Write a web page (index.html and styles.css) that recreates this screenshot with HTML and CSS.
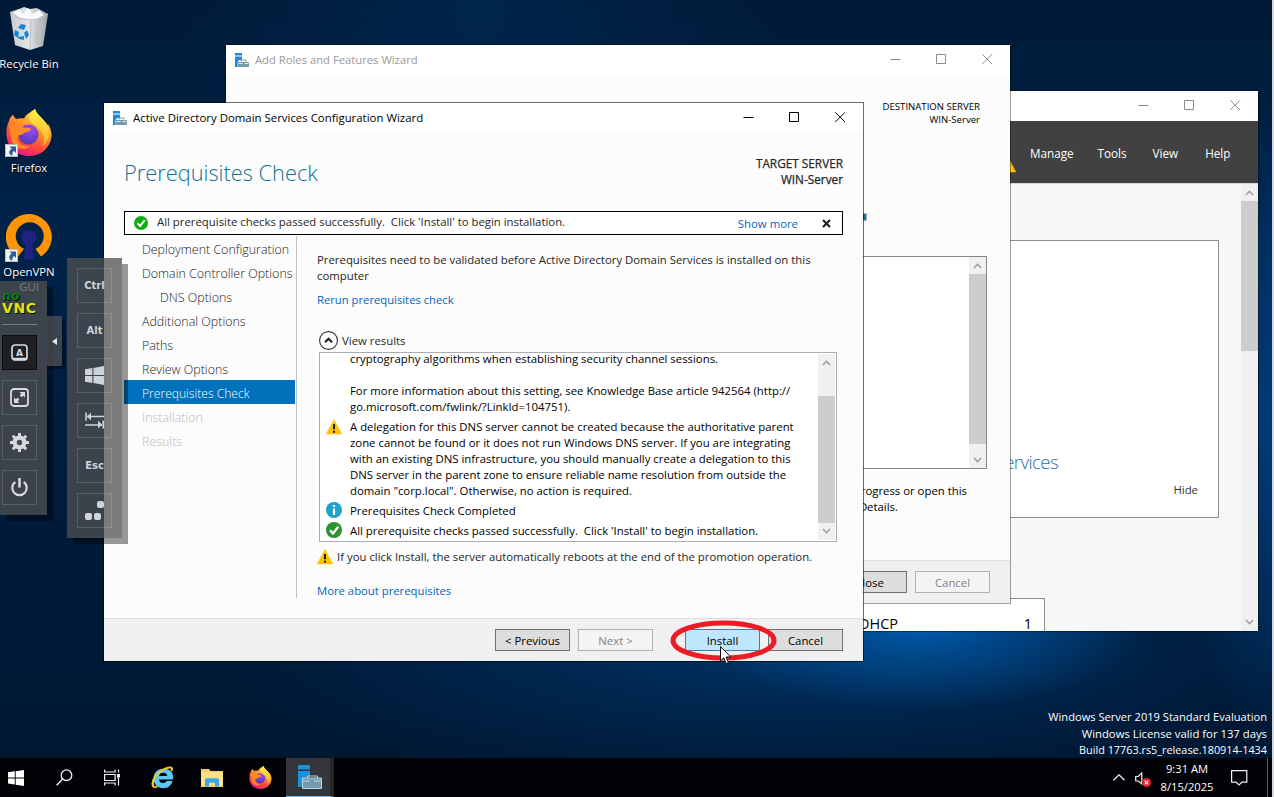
FILE: index.html
```html
<!DOCTYPE html>
<html lang="en">
<head>
<meta charset="utf-8">
<title>Windows Server desktop</title>
<link rel="stylesheet" href="styles.css">
</head>
<body>
<svg class="defs" aria-hidden="true">
  <defs>
    <linearGradient id="ffBody" x1=".8" y1="0" x2=".3" y2="1"><stop offset="0" stop-color="#fff44f"/><stop offset=".35" stop-color="#ffa52a"/><stop offset=".7" stop-color="#ff4a3a"/><stop offset="1" stop-color="#e31587"/></linearGradient>
    <radialGradient id="ffGlobe" cx=".6" cy=".25" r=".8"><stop offset="0" stop-color="#a34bf0"/><stop offset=".6" stop-color="#6a3fd0"/><stop offset="1" stop-color="#4a3aa8"/></radialGradient>
    <linearGradient id="ffTail" x1="0" y1="0" x2="0" y2="1"><stop offset="0" stop-color="#fff04a"/><stop offset="1" stop-color="#ffb02c"/></linearGradient>
    <linearGradient id="bin" x1="0" x2="1"><stop offset="0" stop-color="#c9ccd0"/><stop offset=".5" stop-color="#e2e4e6"/><stop offset="1" stop-color="#9da1a6"/></linearGradient>
  </defs>
  <symbol id="firefox" viewBox="0 0 46 47">
    <path d="M3 12C4 8 6 7 7 5.500C8 8 9 9.500 11 10C13 9 16 9 18 9.500C20 5 25 3 29 0C31 6 36 8 40 14C41 15 42 17 42 15C45 20 46 24 45.500 28C44 39 35 47 23 47C10 47 1 38 .5 26C.3 20 1 16 3 12Z" fill="url(#ffBody)"/>
    <circle cx="22.500" cy="25.500" r="10" fill="url(#ffGlobe)"/>
    <path d="M29 0C31 6 36 8 40 14C45 21 44 31 37 37C39 31 38 24 34 21C30 15 21 14 23 7C24 4 27 2 29 0Z" fill="url(#ffTail)"/>
    <path d="M3 17C7 14 13 15 16 18C19 19 23 18 25 20C24 23 19 23 17 25C15 27 13 25 12 27C10 34 17 38 24 37C17 43 7 39 5 30C4 24 5 20 3 17Z" fill="#ff8a26"/>
  </symbol>
  <symbol id="server" viewBox="0 0 14 14">
    <path d="M0 0h7v2.500H0zM0 3.600h7V7H4L2.600 9V14H0z" fill="#1e88dc"/>
    <path d="M3 9h11v5H3z" fill="#7a99ad"/>
    <path d="M6 8.500V7h5v1.500M3.200 10.800h10.500M5.700 10v1.500M11.200 10v1.500" stroke="#7a99ad" fill="none"/>
    <path d="M3.500 10.500h4M9.500 10.500h4" stroke="#dfe9ef"/>
  </symbol>
  <symbol id="warn" viewBox="0 0 16 16">
    <path d="M8 .5L15.800 15H.2z" fill="#fdc407" stroke="#fdc407" stroke-linejoin="round" stroke-width=".5"/>
    <path d="M8 5v5.300M8 11.700v2" stroke="#1c1c1c" stroke-width="2"/>
  </symbol>
  <symbol id="ok" viewBox="0 0 16 16">
    <circle cx="8" cy="8" r="8" fill="currentColor"/>
    <path d="M4 8.300l3 3.200 5.300-6.800" fill="none" stroke="#fff" stroke-width="2.200"/>
  </symbol>
  <symbol id="min" viewBox="0 0 11 11"><path d="M.5 5.500h10" stroke="currentColor"/></symbol>
  <symbol id="max" viewBox="0 0 11 11"><path d="M.5 .5h9v9h-9z" fill="none" stroke="currentColor"/></symbol>
  <symbol id="close" viewBox="0 0 11 11"><path d="M.3 .3l9.700 9.700M10 .3L.3 10" stroke="currentColor" fill="none"/></symbol>
  <symbol id="up" viewBox="0 0 9 6"><path d="M1 5l3.500-3.700L8 5" fill="none" stroke="#9b9b9b" stroke-width="1.500"/></symbol>
  <symbol id="down" viewBox="0 0 9 6"><path d="M1 1l3.500 3.700L8 1" fill="none" stroke="#9b9b9b" stroke-width="1.500"/></symbol>
  <symbol id="link" viewBox="0 0 13 13"><path d="M0 0h13v13H0z" fill="#f4f5f6"/><path d="M.5 .5h12v12h-12z" fill="none" stroke="#b8bcc0"/><path d="M4.500 2.500H11V9L9 7C7.500 8 7.200 9.500 7.500 11.500C3.500 11 3 7 6.700 4.700z" fill="#2c5c9c"/></symbol>
</svg>

<div class="desktop">
  <div class="shortcuts">
    <div class="shortcut">
      <svg class="bin-icon" viewBox="0 0 38 43"><path d="M0 5L9 2 14 0 20 2 27 1 38 7 33 39 20 43 5 38z" fill="url(#bin)"/><path d="M3 6l6-4 4 5 5-6 5 6 6-4 5 5-9 5-14-2z" fill="#fbfbfb"/><path d="M0 5l8 6 12 2 8-1 10-5" fill="none" stroke="#b9bdc1"/><path d="M21 14l-1 28M27 20l6-6-2 13-5 3 5 5M25 16l3 6-3 9 2 6" fill="none" stroke="#b9bdc1"/><path d="M8 21l3-4 5 1-2 5zM5 23l4 2-1 6-4-3zM14 26l3-3 2 5-3 4zM8 30l6-1v4l-5-1z" fill="#1486dd"/></svg>
      <span>Recycle Bin</span>
    </div>
    <div class="shortcut fox">
      <svg class="app-icon" ><use href="#firefox"/></svg><svg class="arrow"><use href="#link"/></svg>
      <span>Firefox</span>
    </div>
    <div class="shortcut vpn">
      <svg class="app-icon" viewBox="0 0 46 46"><path d="M11.500 42.500L18 34.500A14 14 0 1 1 29.500 34.500L35 42A23 23 0 1 0 11.500 42.500Z" fill="#ff9505"/><circle cx="23" cy="23" r="7.500" fill="#1e2283"/><path d="M20 27h6l2 18H18z" fill="#1e2283"/></svg><svg class="arrow"><use href="#link"/></svg>
      <span>OpenVPN<br>GUI</span>
    </div>
  </div>

  <section class="window manager">
    <div class="titlebar"><div class="controls"><svg><use href="#min"/></svg><svg><use href="#max"/></svg><svg><use href="#close"/></svg></div></div>
    <nav class="menubar"><svg><use href="#warn"/></svg><span class="m1">Manage</span><span class="m2">Tools</span><span class="m3">View</span><span>Help</span></nav>
    <div class="manager-body">
      <div class="dashboard">
        <div class="welcome"><p class="welcome-link">Services</p><p class="hide">Hide</p></div>
        <div class="tile"><span>DHCP</span><span>1</span></div>
      </div>
      <div class="scroll tall"><svg><use href="#up"/></svg><i></i><svg><use href="#down"/></svg></div>
    </div>
  </section>

  <section class="window roles">
    <div class="titlebar"><svg class="logo"><use href="#server"/></svg><span>Add Roles and Features Wizard</span><div class="controls"><svg><use href="#min"/></svg><svg><use href="#max"/></svg><svg><use href="#close"/></svg></div></div>
    <div class="roles-body">
      <p class="destination">DESTINATION SERVER<br>WIN-Server</p>
      <div class="progress"></div>
      <div class="roles-list"><div class="scroll"><svg><use href="#up"/></svg><i></i><svg><use href="#down"/></svg></div></div>
      <p class="roles-note">progress or open this<br><span>Details.</span></p>
    </div>
    <footer><button>Close</button><button class="off">Cancel</button></footer>
  </section>

  <section class="window adds">
    <div class="titlebar"><svg class="logo"><use href="#server"/></svg><span>Active Directory Domain Services Configuration Wizard</span><div class="controls"><svg><use href="#min"/></svg><svg><use href="#max"/></svg><svg><use href="#close"/></svg></div></div>
    <div class="adds-body">
      <header><h1>Prerequisites Check</h1><p>TARGET SERVER<br>WIN-Server</p></header>
      <div class="banner"><svg><use href="#ok"/></svg><span class="msg">All prerequisite checks passed successfully.&nbsp; Click 'Install' to begin installation.</span><a>Show more</a><svg class="x" viewBox="0 0 9 9"><path d="M1 1l7 7M8 1L1 8" stroke="#222" stroke-width="2.200"/></svg></div>
      <div class="columns">
        <ul class="steps">
          <li>Deployment Configuration</li><li>Domain Controller Options</li><li class="sub">DNS Options</li><li>Additional Options</li><li>Paths</li><li>Review Options</li><li class="current">Prerequisites Check</li><li class="todo">Installation</li><li class="todo">Results</li>
        </ul>
        <main>
          <p class="intro">Prerequisites need to be validated before Active Directory Domain Services is installed on this<br>computer</p>
          <a class="rerun">Rerun prerequisites check</a>
          <div class="toggle"><svg viewBox="0 0 19 19"><circle cx="9.500" cy="9.500" r="8.900" fill="#fff" stroke="#333" stroke-width="1.100"/><path d="M6 11.300l3.500-3.500 3.500 3.500" fill="none" stroke="#222" stroke-width="2.200"/></svg><span>View results</span></div>
          <div class="results">
            <div class="entries">
              <div class="entry"><b></b><p>cryptography algorithms when establishing security channel sessions.<br><br>For more information about this setting, see Knowledge Base article 942564 (http://<br>go.microsoft.com/fwlink/?LinkId=104751).</p></div>
              <div class="entry"><svg><use href="#warn"/></svg><p>A delegation for this DNS server cannot be created because the authoritative parent<br>zone cannot be found or it does not run Windows DNS server. If you are integrating<br>with an existing DNS infrastructure, you should manually create a delegation to this<br>DNS server in the parent zone to ensure reliable name resolution from outside the<br>domain "corp.local". Otherwise, no action is required.</p></div>
              <div class="entry"><svg class="lift" viewBox="0 0 16 16"><circle cx="8" cy="8" r="8" fill="#21a1c7"/><path d="M8 3v2M8 6.500V13" stroke="#fff" stroke-width="2.200"/></svg><p>Prerequisites Check Completed</p></div>
              <div class="entry"><svg class="lift"><use href="#ok"/></svg><p>All prerequisite checks passed successfully.&nbsp; Click 'Install' to begin installation.</p></div>
            </div>
            <div class="scroll"><svg><use href="#up"/></svg><i></i><svg><use href="#down"/></svg></div>
          </div>
          <div class="reboot"><svg><use href="#warn"/></svg><span>If you click Install, the server automatically reboots at the end of the promotion operation.</span></div>
          <a class="more">More about prerequisites</a>
        </main>
      </div>
    </div>
    <footer><button>&lt; Previous</button><button class="off">Next &gt;</button><button class="primary">Install</button><button>Cancel</button></footer>
    <svg class="ring" viewBox="0 0 108 42"><ellipse cx="53.500" cy="20.500" rx="50.500" ry="17.500" fill="none" stroke="#ed1c24" stroke-width="5"/></svg>
    <svg class="cursor" viewBox="0 0 12 19"><path d="M.5 .5v14.500l3.300-3.200 2.300 5.700 2.300-1-2.300-5.500h4.600z" fill="#fff" stroke="#111"/></svg>
  </section>

  <div class="vnc">
    <div class="vnc-logo"><span>no</span><span>VNC</span></div>
    <hr>
    <div class="key active"><svg viewBox="0 0 17 17"><rect x="1" y="1" width="15" height="15" rx="3" fill="none" stroke="#d6d9de" stroke-width="1.700"/><path d="M2 15h13" stroke="#d6d9de" stroke-width="2.500"/><text x="8.500" y="11.500" text-anchor="middle">A</text></svg></div>
    <div class="key"><svg viewBox="0 0 19 19"><rect x="1" y="1" width="17" height="17" rx="3" fill="none" stroke="#d6d9de" stroke-width="1.800"/><path d="M9.500 4h5.500v5.500l-1.800-1.800-1.700 1.600-1.800-1.800 1.600-1.700zM9.500 15H4V9.500l1.800 1.800 1.700-1.600 1.800 1.800-1.600 1.700z" fill="#d6d9de"/></svg></div>
    <div class="key"><svg viewBox="0 0 19 19"><g fill="#d6d9de"><circle cx="9.500" cy="9.500" r="7"/><path d="M8 0h3v19H8zM0 8h19v3H0z"/><path d="M8 0h3v19H8zM0 8h19v3H0z" transform="rotate(45 9.500 9.500)"/></g><circle cx="9.500" cy="9.500" r="2.700" fill="#484a4d"/></svg></div>
    <div class="key"><svg viewBox="0 0 19 19"><path d="M5.300 4A7.200 7.200 0 1 0 13.700 4" fill="none" stroke="#d6d9de" stroke-width="2.200"/><path d="M9.500 0v9.500" stroke="#d6d9de" stroke-width="2.600"/></svg></div>
    <div class="handle"><svg viewBox="0 0 5 7"><path d="M5 0v7L0 3.500z" fill="#e3e5e8"/></svg></div>
  </div>
  <div class="keys">
    <div class="key">Ctrl</div>
    <div class="key">Alt</div>
    <div class="key"><svg viewBox="0 0 18 18"><path d="M0 3l7-1v6.500H0zM8 1.800L18 0v8.500H8zM0 9.500h7V16l-7-1zM8 9.500h10V18L8 16.200z" fill="#ced2d9"/></svg></div>
    <div class="key"><svg viewBox="0 0 19 18"><path d="M1 1v8M2 5h17M18.200 9v8M0 13.500h17" stroke="#ced2d9" stroke-width="1.600"/><path d="M2 5l4-4v8zM17 13l-4-4v8z" fill="#ced2d9"/></svg></div>
    <div class="key">Esc</div>
    <div class="key"><svg viewBox="0 0 19 19"><g fill="#ced2d9"><rect x="12" y="0" width="7" height="7" rx="2"/><rect x="0" y="12" width="7" height="7" rx="2"/><rect x="9" y="12" width="7" height="7" rx="2"/></g></svg></div>
  </div>

  <p class="watermark">Windows Server 2019 Standard Evaluation<br><span class="license">Windows License valid for 137 days</span><br><span class="build">Build 17763.rs5_release.180914-1434</span></p>

  <div class="taskbar">
    <div class="task"><svg viewBox="0 0 16 16" class="s16"><path d="M0 2.300l6.800-1v6.200H0zM7.700 1.200L16 0v7.500H7.700zM0 8.400h6.800v6.200L0 13.600zM7.700 8.400H16V16l-8.300-1.200z" fill="#fff"/></svg></div>
    <div class="task"><svg viewBox="0 0 17 17" class="s17"><circle cx="10.500" cy="6.200" r="5.300" fill="none" stroke="#f2f2f2" stroke-width="1.300"/><path d="M6.700 10L.6 16.200" stroke="#f2f2f2" stroke-width="1.400"/></svg></div>
    <div class="task"><svg viewBox="0 0 17 16" class="s17"><path d="M.6 0v2.500h10.500V0M.6 16v-2.500h10.500V16M.6 5h10.500v6H.6zM14.500 0v3M14.500 8v8" fill="none" stroke="#f2f2f2" stroke-width="1.200"/><path d="M13 4.500h3V8h-3z" fill="#f2f2f2"/></svg></div>
    <div class="task"><svg viewBox="0 0 23 23" class="s23"><path d="M21.500 15h-6c-.6 1.300-1.800 2-3.300 2-2.400 0-4-1.400-4.100-3.600h14C23 6 18.500 2.800 12.500 2.800 6.500 2.800 2.500 7 2.500 12.500s4 9.700 10 9.700c4.500 0 7.800-2.500 9-7.200zM8.200 10c.2-2 1.700-3.200 4-3.200s3.800 1.200 4 3.200z" fill="#5cc6f6"/><path d="M2.500 20.500C-1 13 10 3 18 1.500c3-.5 3.500 1 2.500 3.500" fill="none" stroke="#f7c62f" stroke-width="2"/><path d="M1.500 17c-.5 4 2 5 5 3.500" fill="none" stroke="#f7c62f" stroke-width="1.800"/></svg></div>
    <div class="task"><svg viewBox="0 0 22 19" class="s22"><path d="M0 1h8l1.500 2H22v16H0z" fill="#f6cf60"/><path d="M0 4h22v13.500H0z" fill="#fde08a"/><path d="M4 18.500v-6.500q0-1.800 1.800-1.800h10.400q1.800 0 1.800 1.800v6.500h-4v-3.700H8v3.700z" fill="#37a8e4"/></svg></div>
    <div class="task"><svg class="s23"><use href="#firefox"/></svg></div>
    <div class="task on"><svg viewBox="0 0 24 24" class="s24"><path d="M0 0h12v4.500H0zM0 6h12v6H8l-3 4v6H0z" fill="#1e90dc"/><path d="M5 13h19v10H5z" fill="#7799ad"/><path d="M9.500 13v-2h10v2M4.500 13h19v10.500h-19zM5 16h7M16 16h7" fill="none" stroke="#b8d8ea"/></svg></div>
    <div class="tray">
      <svg viewBox="0 0 12 7" class="chev"><path d="M.5 6.300L6 .8l5.500 5.500" fill="none" stroke="#eee" stroke-width="1.300"/></svg>
      <svg viewBox="0 0 17 16" class="vol"><path d="M.7 4.500h2.600L6.800 1v11L3.300 9H.7z" fill="none" stroke="#eee" stroke-width="1.200"/><circle cx="11.500" cy="10.500" r="4.500" fill="#e02030"/><path d="M9.700 8.700l3.600 3.600M13.300 8.700l-3.600 3.600" stroke="#fff" stroke-width="1.200"/></svg>
      <p class="clock">9:31 AM<br>8/15/2025</p>
      <svg viewBox="0 0 17 16" class="note"><path d="M.6 .6h15.200v11.500H11L8 15l-3-2.900H.6z" fill="none" stroke="#f2f2f2" stroke-width="1.200"/></svg>
      <i class="peek"></i>
    </div>
  </div>
  <div class="edge"></div>
</div>
</body>
</html>
```
FILE: styles.css
```css
* { box-sizing: border-box; }
body { margin: 0; font: 11.36px/16px "Open Sans", "Noto Sans", sans-serif; color: #000; }
p, h1, ul { margin: 0; padding: 0; font-weight: 400; }
svg { display: block; flex: none; }
.defs { position: absolute; width: 0; height: 0; }
.desktop {
  position: relative; width: 1274px; height: 797px; overflow: hidden; white-space: nowrap;
  background:
    radial-gradient(ellipse 230px 85px at 920px 625px, #005cae 0%, rgba(0,84,160,.7) 35%, transparent 100%),
    radial-gradient(ellipse 120px 330px at 1290px 430px, rgba(0,75,150,.75), transparent 100%),
    radial-gradient(ellipse 560px 140px at 780px 650px, rgba(0,70,135,.55), transparent 100%),
    radial-gradient(ellipse 300px 260px at 480px 0, rgba(0,48,95,.5), transparent 100%),
    linear-gradient(180deg, #001a37 0, #00234a 30%, #001b3c 60%, #001731 100%);
}
a { color: #0066bf; }

.shortcuts { position: absolute; left: 0; top: 7px; width: 58px; color: #fff; }
.shortcut { position: relative; display: flex; flex-direction: column; align-items: center; height: 102px; text-align: center; line-height: 15px; text-shadow: 0 1px 2px #000; }
.shortcut span { margin-top: 6px; }
.bin-icon { width: 38px; height: 43px; }
.app-icon { width: 46px; height: 47px; }
.shortcut.fox { height: 105px; }
.shortcut.fox span { margin-top: 4px; }
.shortcut.vpn span { margin-top: 3px; }
.shortcut .arrow { position: absolute; left: 5px; top: 35px; width: 13px; height: 13px; }

.window { position: absolute; display: flex; flex-direction: column; border: 1px solid rgba(0,0,0,.38); background: #fcfcfc; background-clip: padding-box; }
.titlebar { flex: none; height: 30px; display: flex; align-items: center; background: #fff; color: #999; padding: 0 0 1px 9px; }
.titlebar span { margin-left: 6px; }
.logo { width: 14px; height: 14px; }
.controls { display: flex; margin-left: auto; color: #8c8c8c; }
.controls svg { width: 11px; height: 11px; margin: 0 17px 0 18px; }
footer { display: flex; align-items: flex-start; gap: 8px; height: 43px; padding: 10px 20px 0; border-top: 1px solid #dfdfdf; background: #f0f0f0; justify-content: flex-end; }
button { width: 75px; height: 22px; padding: 1px 0 0; font: inherit; line-height: 18px; border: 1px solid #707070; background: #ddd; color: #000; }
button.off { border-color: #adb2b5; background: #f4f4f4; color: #838383; }
button.primary { margin-left: 24px; border-color: #3c7fb1; background: #bee6fd; }
.scroll { width: 17px; display: flex; flex-direction: column; align-items: center; background: #f0f0f0; }
.scroll svg { width: 9px; height: 6px; }
.scroll i { width: 17px; background: #cdcdcd; }

.manager { left: 860px; top: 90px; width: 399px; height: 542px; background-color: #f7f7f7; }
.menubar { height: 62px; display: flex; align-items: center; background: #414141; color: #fff; padding: 2px 26px 0 139px; font-size: 11.700px; }
.menubar svg { width: 16px; height: 16px; margin: 24px 14px 0 0; }
.menubar .m1 { margin-right: 24px; }
.menubar .m2 { margin-right: 26px; }
.menubar .m3 { margin-right: 27px; }
.manager-body { flex: 1; display: flex; min-height: 0; border-top: 1px solid #d8d8d8; }
.dashboard { flex: 1; overflow: hidden; }
.welcome { height: 278px; margin-top: 56px; width: 358px; background: #fff; border: 1px solid #8e8e8e; }
.welcome-link { padding: 209px 160px 0 0; text-align: right; font-size: 18.500px; letter-spacing: -.55px; line-height: 24px; font-weight: 300; color: #1a6fba; }
.hide { text-align: right; padding: 8px 20px 0 0; color: #333; }
.tile { display: flex; justify-content: space-between; width: 184px; height: 60px; margin-top: 80px; padding: 16px 12px 0 0; background: #fff; border: 1px solid #8e8e8e; font-size: 14.500px; line-height: 18px; }
.tile span:first-child { margin-left: -3px; }
.tall { padding: 6px 0; height: 447px; }
.tall i { height: 150px; margin: 5px 0 auto; }

.roles { left: 225px; top: 44px; width: 786px; height: 560px; }
.roles .titlebar { font-size: 11.260px; }
.roles-body { flex: 1; display: flex; flex-direction: column; align-items: flex-end; padding: 25px 23px 0 0; }
.destination { padding-right: 7px; text-align: right; font-size: 9.6px; line-height: 13px; }
.progress { width: 40px; height: 8px; margin: 87px 120px 0 0; background: #0d7597; border: 1px solid #b5b5b5; }
.roles-list { display: flex; justify-content: flex-end; width: 300px; height: 213px; margin-top: 35px; border: 1px solid #828790; background: #fff; }
.roles-list .scroll { padding: 6px 0 5px; }
.roles-list i { height: 170px; margin: 5px 0 auto; }
.roles-note { margin-top: 14px; padding-right: 20px; text-align: right; }
.roles-note span { padding-right: 69px; }

.adds { left: 103px; top: 102px; width: 761px; height: 560px; border-color: rgba(0,0,0,.58); }
.adds .titlebar, .adds .controls { color: #000; }
.adds .titlebar { font-size: 11.420px; }
.adds-body { flex: 1; padding: 0 20px; color: #262626; }
header { display: flex; justify-content: space-between; height: 78px; }
h1 { margin-top: 24px; font-size: 21.800px; line-height: 32px; font-weight: 300; color: #0f7296; }
header p { margin-top: 22px; text-align: right; font-size: 11.800px; -webkit-text-stroke: .25px #262626; }
.banner { display: flex; align-items: center; height: 24px; padding: 0 11px 0 9px; border: 1px solid #000; background: #fff; }
.banner svg { width: 14px; height: 14px; color: #0fac12; }
.banner .x { width: 9px; height: 9px; margin-left: 24px; }
.msg { margin: -2px auto 0 9px; }
.banner a { padding-top: 2px; }
.columns { display: flex; padding-top: 1px; }
.steps { width: 173px; height: 362px; list-style: none; border-right: 1px solid #c3c3c3; font-size: 12.450px; line-height: 27px; font-weight: 300; color: #222; }
.steps li { height: 24px; padding-left: 18px; margin-right: 1px; }
.steps .sub { padding-left: 36px; }
.steps .current { background: #0072bc; color: #fff; font-size: 12.100px; }
.steps .todo { color: #b9b9b9; }
main { padding: 16px 0 0 20px; }
main a { display: block; }
.rerun { margin-top: 8px; font-size: 11.260px; }
.toggle { display: flex; align-items: center; gap: 4px; height: 19px; margin: 23px 0 2px 2px; }
.toggle svg { width: 19px; height: 19px; }
.results { display: flex; width: 518px; height: 190px; margin-left: 2px; padding-right: 1px; border: 1px solid #abadb3; background: #fff; overflow: hidden; color: #000; }
.entries { flex: 1; display: flex; flex-direction: column; gap: 4px; margin-top: -2px; padding-left: 6px; }
.entry { display: flex; gap: 8px; }
.entry svg, .entry b { width: 16px; height: 16px; flex: none; color: #2f922f; }
.entry .lift { margin-top: -1px; }
.results .scroll { height: 186px; margin-top: 1px; padding: 6px 0; }
.results i { height: 127px; margin: 30px 0 auto; }
.reboot { display: flex; gap: 4px; margin-top: 7px; }
.reboot svg { width: 16px; height: 16px; }
.more { margin-top: 18px; font-size: 11.300px; }
.ring { position: absolute; left: 566px; top: 517px; width: 108px; height: 42px; }
.cursor { position: absolute; left: 616px; top: 543px; width: 12px; height: 19px; }

.vnc, .keys { position: absolute; display: flex; flex-direction: column; background: rgba(80,80,80,.75); box-shadow: 6px 6px 0 rgba(0,0,0,.4); font-family: "DejaVu Sans", sans-serif; }
.vnc { left: 0; top: 281px; width: 47px; height: 234px; padding: 12px 0 0 2px; }
.vnc-logo { height: 31px; font-weight: 700; color: #ff0; display: flex; flex-direction: column; text-shadow: 1px 1px 0 #000; opacity: .85; }
.vnc-logo span { height: 12px; font-size: 14px; line-height: 12px; letter-spacing: .6px; }
.vnc-logo span:first-child { color: #008a00; height: 9px; line-height: 6px; font-size: 12px; }
.vnc hr { width: 35px; height: 1px; margin: 0 0 10px; border: 0; background: #777a7d; }
.key { flex: none; width: 35px; height: 35px; display: flex; align-items: center; justify-content: center; border: 1px solid rgba(255,255,255,.15); color: #ced2d9; font-size: 10px; font-weight: 700; margin-bottom: 10px; }
.key.active { background: #1e2023; border-color: #0d0e10; }
.key svg { width: 19px; height: 19px; }
.key.active svg { width: 17px; height: 17px; }
.key text { font: 700 9px "DejaVu Sans", sans-serif; fill: #d6d9de; }
.handle { position: absolute; left: 47px; top: 35px; width: 15px; height: 50px; display: flex; align-items: center; justify-content: center; background: rgba(80,80,80,.75); box-shadow: 3px 3px 0 rgba(0,0,0,.4); }
.handle svg { width: 5px; height: 7px; }
.keys { left: 67px; top: 258px; width: 55px; height: 280px; padding: 10px 0 0 10px; }

.watermark { position: absolute; right: 7px; top: 709px; text-align: right; color: #fff; font-size: 11.120px; line-height: 16.500px; }
.license { font-size: 11.300px; }
.build { font-size: 10.850px; }
.taskbar { position: absolute; left: 0; top: 758px; width: 1272px; height: 39px; display: flex; background: #020306; color: #fff; }
.task { width: 49px; display: flex; align-items: center; justify-content: center; }
.task:first-child { width: 32px; margin-right: 8px; }
.task:nth-child(2), .task:nth-child(3) { width: 48px; }
.task:nth-child(4) { margin-left: 2px; }
.task.on { width: 48px; margin-left: 1px; padding-left: 3px; background: #35363a; border-bottom: 1px solid #76b9ed; border-right: 4px solid #242528; }
.s16 { width: 16px; height: 16px; }
.s17 { width: 17px; height: 17px; }
.s22 { width: 22px; height: 19px; }
.s23 { width: 23px; height: 23px; }
.s24 { width: 24px; height: 24px; }
.tray { margin-left: auto; display: flex; align-items: center; }
.chev { width: 12px; height: 7px; }
.vol { width: 17px; height: 16px; margin: 4px 0 0 10px; }
.clock { width: 70px; text-align: center; font-size: 11.200px; line-height: 18px; }
.note { width: 17px; height: 16px; margin: 0 19px 0 9px; }
.peek { width: 1px; height: 39px; margin-right: 4px; background: #55585c; }
.edge { position: absolute; right: 0; top: 0; width: 2px; height: 797px; background: #d5d7da; }
```
